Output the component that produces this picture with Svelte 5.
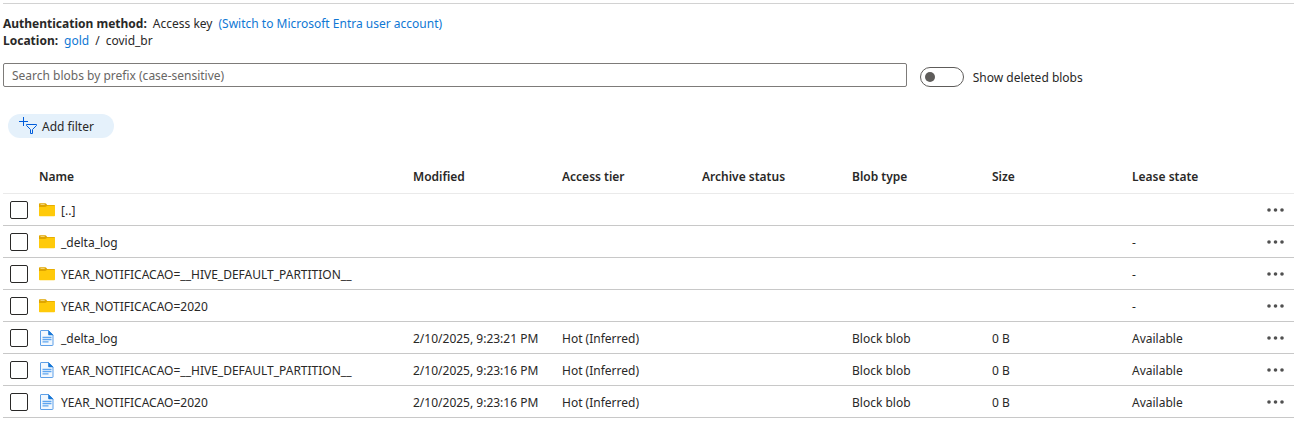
<script>
  const columns = ['Name', 'Modified', 'Access tier', 'Archive status', 'Blob type', 'Size', 'Lease state'];

  const folder = (name, lease = '-') => ({
    kind: 'folder', name, modified: '', tier: '', archive: '', type: '', size: '', lease
  });
  const file = (name, modified) => ({
    kind: 'file', name, modified, tier: 'Hot (Inferred)', archive: '', type: 'Block blob', size: '0 B', lease: 'Available'
  });

  const rows = [
    folder('[..]', ''),
    folder('_delta_log'),
    folder('YEAR_NOTIFICACAO=__HIVE_DEFAULT_PARTITION__'),
    folder('YEAR_NOTIFICACAO=2020'),
    file('_delta_log', '2/10/2025, 9:23:21 PM'),
    file('YEAR_NOTIFICACAO=__HIVE_DEFAULT_PARTITION__', '2/10/2025, 9:23:16 PM'),
    file('YEAR_NOTIFICACAO=2020', '2/10/2025, 9:23:16 PM')
  ];

  let showDeleted = $state(false);
  let prefix = $state('');
</script>

<main>
  <section class="info">
    <div><strong>Authentication method:</strong> <span>Access key</span> <a href="#switch">(Switch to Microsoft Entra user account)</a></div>
    <div><strong>Location:</strong> <a href="#gold">gold</a> <span>/</span> <span>covid_br</span></div>
  </section>

  <div class="search">
    <input type="text" bind:value={prefix} aria-label="Search blobs by prefix" placeholder="Search blobs by prefix (case-sensitive)" />
    <label class="toggle">
      <input type="checkbox" role="switch" bind:checked={showDeleted} />
      <span>Show deleted blobs</span>
    </label>
  </div>

  <button class="filter" type="button">
    <svg width="18" height="18" viewBox="0 0 18 18" fill="none" stroke="#015cda" aria-hidden="true">
      <path d="M4.500 0v9M0 4.500h9" />
      <path d="M7.500 7.500h10v1l-4 4v4h-2v-4l-4-4z" />
    </svg>
    Add filter
  </button>

  <table>
    <colgroup>
      <col class="c-check" /><col /><col class="c-modified" /><col class="c-narrow" /><col class="c-archive" />
      <col class="c-narrow" /><col class="c-narrow" /><col class="c-lease" /><col class="c-menu" />
    </colgroup>
    <thead>
      <tr>
        <td></td>
        {#each columns as column}<th scope="col">{column}</th>{/each}
        <td></td>
      </tr>
    </thead>
    <tbody>
      {#each rows as row}
        <tr>
          <td class="check"><input type="checkbox" aria-label={row.name} /></td>
          <td>
            <div class="name">
              {#if row.kind === 'folder'}
                <svg width="16" height="16" viewBox="0 0 16 16" aria-hidden="true">
                  <path d="M0 2q0-.8.8-.8h5.400q.5 0 .8.4L8.200 3h7q.8 0 .8.8V8H0z" fill="#dfa500" />
                  <path d="M1.500 2.500h4.200" stroke="#f7dc8a" stroke-width=".8" />
                  <path d="M0 5h6.200q.5 0 .9-.4l.9-.7q.3-.2.700-.2H16v9.800q0 .8-.8.8H.8q-.8 0-.8-.8z" fill="#ffca0a" />
                </svg>
              {:else}
                <svg width="16" height="16" viewBox="0 0 16 16" aria-hidden="true">
                  <path d="M1.500 1q0-.5.5-.5h7.500l4.500 4.500v10q0 .5-.5.5H2q-.5 0-.5-.5z" fill="#f2f8fe" stroke="#5ea0e8" />
                  <path d="M9.200 0l5.300 5.200H9.900q-.7 0-.7-.7z" fill="#1a78d6" />
                  <path d="M3.500 7.500h9M3.500 9.700h9M3.500 11.900h6" stroke="#5ea5f0" stroke-width="1.300" />
                </svg>
              {/if}
              <span>{row.name}</span>
            </div>
          </td>
          <td>{row.modified}</td>
          <td>{row.tier}</td>
          <td>{row.archive}</td>
          <td>{row.type}</td>
          <td>{row.size}</td>
          <td>{row.lease}</td>
          <td class="menu">
            <button type="button" aria-label="More actions">
              <svg width="18" height="6" viewBox="0 0 18 6" fill="#505050" aria-hidden="true">
                <circle cx="3" cy="3" r="1.800" /><circle cx="9.500" cy="3" r="1.800" /><circle cx="16" cy="3" r="1.800" />
              </svg>
            </button>
          </td>
        </tr>
      {/each}
    </tbody>
  </table>
</main>

<style>
  :global(body) {
    background: #fff;
  }
  main {
    margin: 3px 4px 0 3px;
    border-top: 1px solid #d2d2d2;
    color: #292827;
    font: 12px/17px "Noto Sans", sans-serif;
  }
  input, button {
    font: inherit;
    color: inherit;
    box-sizing: border-box;
    margin: 0;
  }
  svg {
    display: block;
    flex: none;
  }
  a {
    color: #0f78d4;
    text-decoration: none;
  }
  .info {
    padding-top: 11px;
  }
  .info div {
    display: flex;
    gap: 6px;
  }
  strong {
    font-weight: 700;
  }
  .search {
    display: flex;
    align-items: center;
    gap: 13px;
    margin-top: 14px;
  }
  .search > input {
    width: 70%;
    height: 24px;
    padding: 0 8px;
    border: 1px solid #7d7b79;
    border-radius: 2px;
    background: #fff;
  }
  .search > input::placeholder {
    color: #686664;
    opacity: 1;
  }
  .toggle {
    display: flex;
    align-items: center;
    gap: 9px;
    padding-top: 4px;
  }
  .toggle input {
    appearance: none;
    display: flex;
    align-items: center;
    width: 44px;
    height: 20px;
    padding: 0 4px;
    border: 1px solid #5e5c5a;
    border-radius: 10px;
  }
  .toggle input::before {
    content: "";
    width: 10px;
    height: 10px;
    border-radius: 50%;
    background: #5e5c5a;
  }
  .toggle input:checked {
    justify-content: flex-end;
  }
  .filter {
    display: flex;
    align-items: center;
    gap: 5px;
    height: 24px;
    margin: 27px 0 0 5px;
    padding: 0 20px 0 11px;
    border: 0;
    border-radius: 12px;
    background: #e5f1fb;
  }
  table {
    width: 100%;
    margin-top: 22px;
    table-layout: fixed;
    border-collapse: separate;
    border-spacing: 0;
  }
  .c-check { width: 36px; }
  .c-modified { width: 149px; }
  .c-narrow { width: 140px; }
  .c-archive { width: 150px; }
  .c-lease { width: 130px; }
  .c-menu { width: 32px; }
  th, td {
    box-sizing: border-box;
    height: 32px;
    padding: 0;
    border-bottom: 1px solid #c8c8c8;
    text-align: left;
    white-space: nowrap;
  }
  tbody td {
    padding-top: 1px;
  }
  th {
    font-weight: 600;
  }
  thead th, thead td {
    height: 34px;
    border-bottom-color: #eaeaea;
  }
  tbody .check, tbody .menu {
    padding-top: 0;
  }
  .check input {
    appearance: none;
    display: block;
    width: 18px;
    height: 18px;
    margin-left: 7px;
    border: 1px solid #292827;
    border-radius: 2px;
  }
  .check input:checked {
    background: #0f78d4;
  }
  .name {
    display: flex;
    align-items: center;
    gap: 6px;
  }
  .menu button {
    display: block;
    padding: 4px;
    border: 0;
    background: none;
  }
</style>
